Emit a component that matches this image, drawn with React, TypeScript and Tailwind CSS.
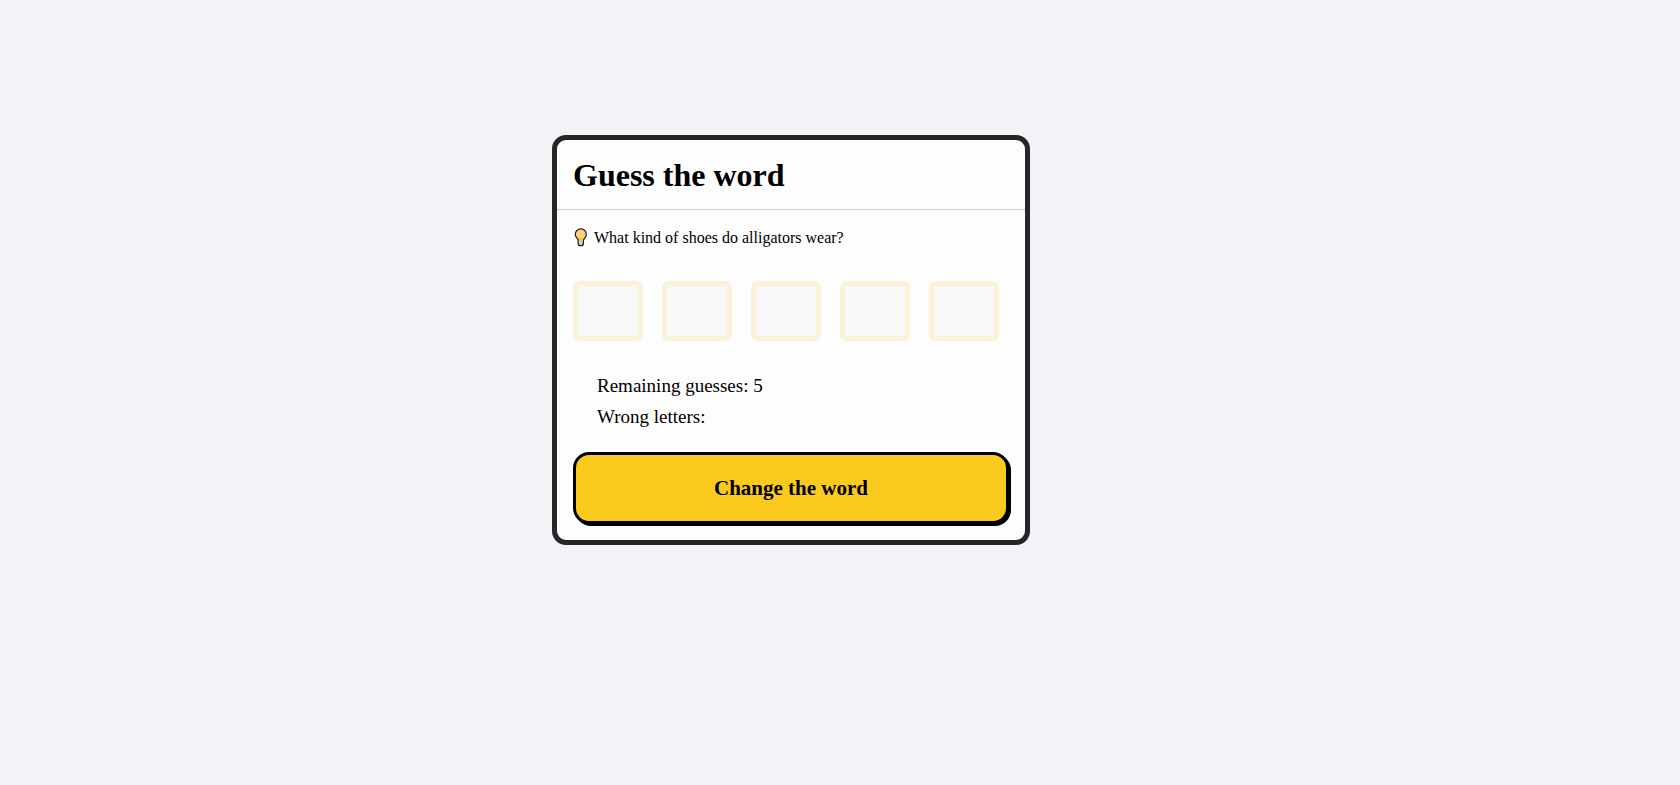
import { useRef, useState } from "react";

type Riddle = {
  word: string;
  hint: string;
};

const riddles: Riddle[] = [
  { word: "crocs", hint: "What kind of shoes do alligators wear?" },
  { word: "piano", hint: "What has keys but opens no locks?" },
  { word: "towel", hint: "What gets wetter the more it dries?" },
];

const MAX_GUESSES = 5;

function BulbIcon() {
  return (
    <svg width="15" height="20" viewBox="0 0 15 20" className="shrink-0" aria-hidden="true">
      <path d="M5.3 12.4h5v3.400c0 1.100-1 1.800-2.500 1.800s-2.500-.7-2.500-1.800z" fill="#d2d2d2" />
      <path
        d="M7.800.9a5.500 5.500 0 0 0-5.500 5.500c0 3.200 2.400 3.600 2.900 6.300h5.200c.5-2.700 2.900-3.100 2.900-6.300a5.500 5.500 0 0 0-5.500-5.500z"
        fill="#ffd47a"
      />
      <path d="M5 9.800l1.400.8 1.400-.8 1.400.8 1.400-.8-.4 2.900H5.400z" fill="#fcc12f" />
      <path
        d="M7.800.9a5.500 5.500 0 0 0-5.500 5.500c0 3.300 2.900 3.600 2.900 6.600v2.700c0 1.200 1 2 2.600 2s2.600-.8 2.600-2V13c0-3 2.900-3.300 2.900-6.600A5.500 5.500 0 0 0 7.800.9z"
        fill="none"
        stroke="#1c1c1c"
        strokeWidth="1.200"
      />
    </svg>
  );
}

export default function App() {
  const [index, setIndex] = useState(0);
  const [guessed, setGuessed] = useState<string[]>([]);
  const typingRef = useRef<HTMLDivElement>(null);

  const { word, hint } = riddles[index];
  const wrong = guessed.filter((l) => !word.includes(l));
  const remaining = MAX_GUESSES - wrong.length;

  const handleKey = (key: string) => {
    const letter = key.toLowerCase();
    if (!/^[a-z]$/.test(letter) || guessed.includes(letter) || remaining <= 0) return;
    setGuessed([...guessed, letter]);
  };

  const changeWord = () => {
    setIndex((index + 1) % riddles.length);
    setGuessed([]);
    typingRef.current?.focus();
  };

  return (
    <main className="min-h-screen bg-[#f1f3f7] pt-[135px] pr-[98px] font-['Liberation_Serif',serif] text-black">
      <div className="mx-auto w-full max-w-[478px] rounded-[14px] border-[5px] border-[#262626] bg-[#fdfdfd]">
        <h1 className="border-b border-[#cccccc] px-4 pt-[17px] pb-4 text-[32px] leading-9 font-bold">
          Guess the word
        </h1>

        <div
          ref={typingRef}
          tabIndex={-1}
          className="px-4 pt-[18px] pb-4 outline-none"
          onKeyDown={(e) => handleKey(e.key)}
        >
          <p className="flex items-center gap-[6px] text-base leading-5">
            <BulbIcon />
            {hint}
          </p>

          <div className="mt-[33px] flex gap-[19px]">
            {word.split("").map((letter, i) => (
              <input
                key={i}
                type="text"
                aria-label={`Letter ${i + 1}`}
                readOnly
                value={guessed.includes(letter) ? letter : ""}
                className="h-[60px] w-[70px] rounded-md border-[5px] border-[#faf3da] bg-[#f8f8f8] text-center text-2xl uppercase outline-none"
              />
            ))}
          </div>

          <div className="mt-[29px] pl-6 text-[19px] leading-[31px]">
            <p>Remaining guesses: {remaining}</p>
            <p>Wrong letters: {wrong.join(", ")}</p>
          </div>

          <button
            type="button"
            onClick={changeWord}
            className="mt-5 h-[72px] w-full cursor-pointer rounded-2xl border-[3px] border-black bg-[#fbca1f] pt-[2px] text-[21px] font-bold shadow-[2px_2px_0_#000]"
          >
            Change the word
          </button>
        </div>
      </div>
    </main>
  );
}
